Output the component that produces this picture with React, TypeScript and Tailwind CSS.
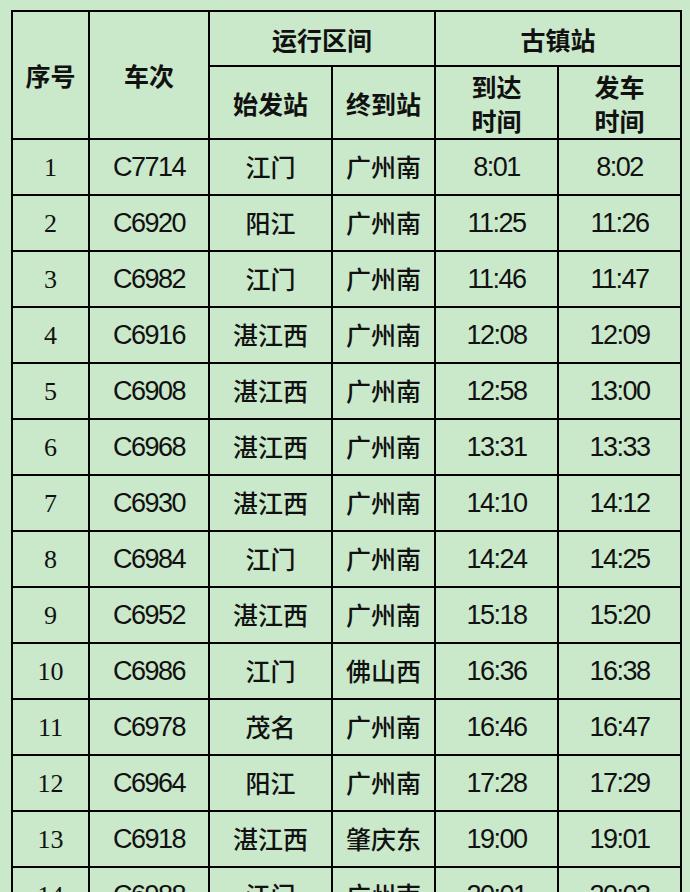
const rows: [string, string, string, string, string, string][] = [
  ['1', 'C7714', '江门', '广州南', '8:01', '8:02'],
  ['2', 'C6920', '阳江', '广州南', '11:25', '11:26'],
  ['3', 'C6982', '江门', '广州南', '11:46', '11:47'],
  ['4', 'C6916', '湛江西', '广州南', '12:08', '12:09'],
  ['5', 'C6908', '湛江西', '广州南', '12:58', '13:00'],
  ['6', 'C6968', '湛江西', '广州南', '13:31', '13:33'],
  ['7', 'C6930', '湛江西', '广州南', '14:10', '14:12'],
  ['8', 'C6984', '江门', '广州南', '14:24', '14:25'],
  ['9', 'C6952', '湛江西', '广州南', '15:18', '15:20'],
  ['10', 'C6986', '江门', '佛山西', '16:36', '16:38'],
  ['11', 'C6978', '茂名', '广州南', '16:46', '16:47'],
  ['12', 'C6964', '阳江', '广州南', '17:28', '17:29'],
  ['13', 'C6918', '湛江西', '肇庆东', '19:00', '19:01'],
  ['14', 'C6988', '江门', '广州南', '20:01', '20:03'],
]

const cjk = "font-['Noto_Sans_CJK_SC',sans-serif]"
const cell = 'border-2 border-black text-center align-middle p-0'
const head = `${cell} ${cjk} font-bold text-[25px] leading-[34px] text-[#111]`
const num = "font-['Liberation_Sans',sans-serif] text-[27px] tracking-[-1.5px]"

export default function App() {
  return (
    <div className="min-h-[892px] w-[690px] bg-[#cae8ca] pl-[11px] pt-[10px]">
      <table className="border-collapse table-fixed w-[669px]">
        <colgroup>
          <col className="w-[77px]" />
          <col className="w-[120px]" />
          <col className="w-[123px]" />
          <col className="w-[103px]" />
          <col className="w-[123px]" />
          <col className="w-[123px]" />
        </colgroup>
        <thead>
          <tr className="h-[55px]">
            <th rowSpan={2} className={head}>序号</th>
            <th rowSpan={2} className={head}>车次</th>
            <th colSpan={2} className={head}>运行区间</th>
            <th colSpan={2} className={head}>古镇站</th>
          </tr>
          <tr className="h-[73px]">
            <th className={head}>始发站</th>
            <th className={head}>终到站</th>
            <th className={head}>
              到达
              <br />
              时间
            </th>
            <th className={head}>
              发车
              <br />
              时间
            </th>
          </tr>
        </thead>
        <tbody>
          {rows.map(([no, train, from, to, arr, dep]) => (
            <tr key={no} className="h-[56px] text-[#111]">
              <td className={`${cell} font-['Liberation_Serif',serif] text-[26px]`}>{no}</td>
              <td className={`${cell} ${num}`}>{train}</td>
              <td className={`${cell} ${cjk} font-medium text-[25px]`}>{from}</td>
              <td className={`${cell} ${cjk} font-medium text-[25px]`}>{to}</td>
              <td className={`${cell} ${num}`}>{arr}</td>
              <td className={`${cell} ${num}`}>{dep}</td>
            </tr>
          ))}
        </tbody>
      </table>
    </div>
  )
}
